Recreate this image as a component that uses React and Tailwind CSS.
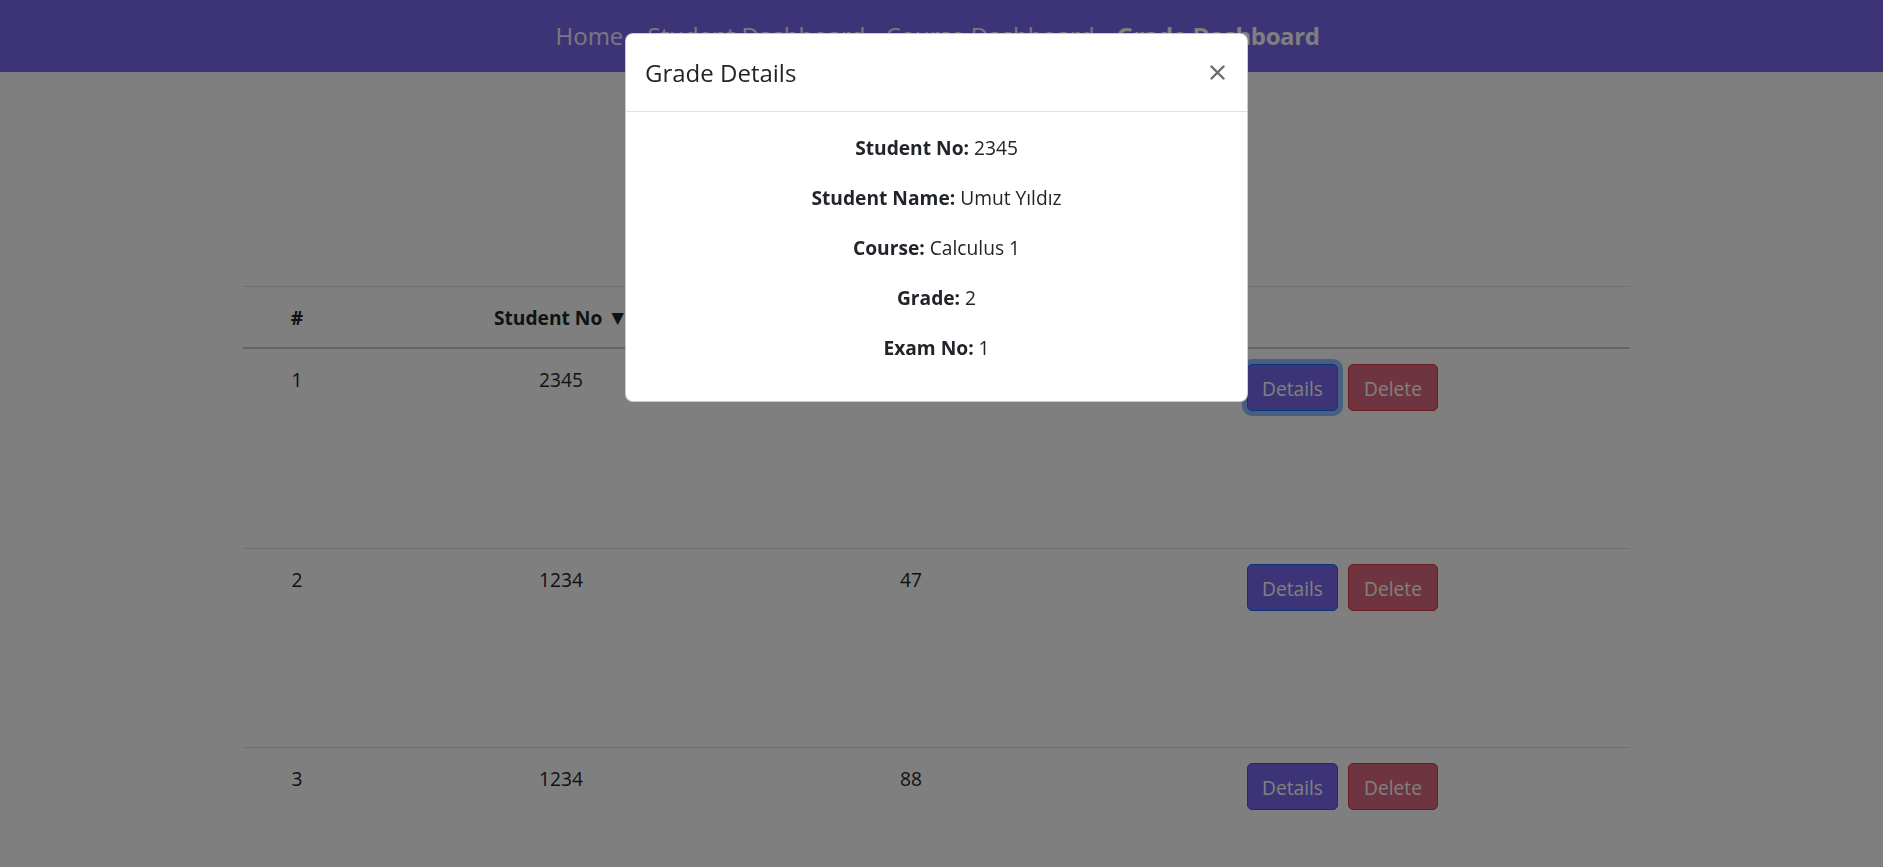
import React from "react";

const rows = [
  { n: 1, no: "2345", grade: "" },
  { n: 2, no: "1234", grade: "47" },
  { n: 3, no: "1234", grade: "88" },
];

export default function App() {
  return (
    <div className="relative h-screen w-full overflow-hidden bg-white font-['Open_Sans',sans-serif] text-[#212529] text-[19.2px] leading-[28.8px]">
      <nav className="h-[72px] w-full bg-[#7b68ee] flex items-center justify-center pr-[10px]">
        <div className="flex items-center text-[24px] leading-[36px] text-white whitespace-nowrap">
          <a className="w-[67px] text-center text-white/90">Home</a>
          <a className="ml-[25px] w-[213px] text-center text-white/90">Student Dashboard</a>
          <a className="ml-[25px] w-[203px] text-center text-white/90">Course Dashboard</a>
          <a className="ml-[28px] w-[201px] text-center font-bold tracking-[-0.4px] text-white">Grade Dashboard</a>
        </div>
      </nav>
      <div className="pr-[10px]">
        <div className="h-[214px]" />
        <div className="mx-auto w-[1387px]">
          <div className="border-t border-[#dee2e6]">
            <div className="flex h-[62px] items-center border-b-2 border-[#c8c8c8] pt-[2px] font-bold">
              <div className="w-[108px] text-center">#</div>
              <div className="w-[420px] text-center">Student No <span className="text-[21px]">▼</span></div>
              <div className="w-[280px]" />
              <div className="flex-1" />
            </div>
            {rows.map((r, i) => (
              <div
                key={r.n}
                className={`flex items-start border-b border-[#dee2e6] pt-[15px] ${i === 0 ? "h-[200px]" : "h-[199px]"}`}
              >
                <div className="mt-[2px] w-[108px] text-center">{r.n}</div>
                <div className="mt-[2px] w-[420px] text-center">{r.no}</div>
                <div className="mt-[2px] w-[280px] text-center">{r.grade}</div>
                <div className="flex flex-1 pl-[196px] gap-[10px]">
                  <button
                    className={`h-[47px] w-[91px] rounded-[5px] border border-[#0d6efd] bg-[#7b68ee] pt-[3px] text-white ${i === 0 ? "shadow-[0_0_0_5px_rgba(13,110,253,0.45)]" : ""}`}
                  >
                    Details
                  </button>
                  <button className="h-[47px] w-[90px] rounded-[5px] border border-[#dc3545] bg-[#dc6880] pt-[3px] text-white">
                    Delete
                  </button>
                </div>
              </div>
            ))}
          </div>
        </div>
      </div>

      <div className="fixed inset-0 z-10 bg-black/50" />

      <div className="fixed inset-0 z-20 flex justify-center pr-[10px]">
        <div className="mt-[33px] h-fit w-[623px] rounded-[8px] border border-black/20 bg-white">
          <div className="flex h-[78px] items-center justify-between border-b border-[#dee2e6] pl-[19px] pr-[18px]">
            <h5 className="text-[24px] leading-[36px] font-normal">Grade Details</h5>
            <button className="flex h-[24px] w-[24px] items-center justify-center">
              <svg width="15" height="15" viewBox="0 0 15 15">
                <path d="M1.5 1.5 L13.5 13.5 M13.5 1.5 L1.5 13.5" stroke="#6b6b6b" strokeWidth="2.4" strokeLinecap="round" />
              </svg>
            </button>
          </div>
          <div className="px-[19px] pt-[21px] pb-[18px] text-center">
            <p className="mb-[21px] leading-[29px]"><b>Student No:</b> 2345</p>
            <p className="mb-[21px] leading-[29px]"><b>Student Name:</b> Umut Yıldız</p>
            <p className="mb-[21px] leading-[29px]"><b>Course:</b> Calculus 1</p>
            <p className="mb-[21px] leading-[29px]"><b>Grade:</b> 2</p>
            <p className="mb-[21px] leading-[29px]"><b>Exam No:</b> 1</p>
          </div>
        </div>
      </div>
    </div>
  );
}
